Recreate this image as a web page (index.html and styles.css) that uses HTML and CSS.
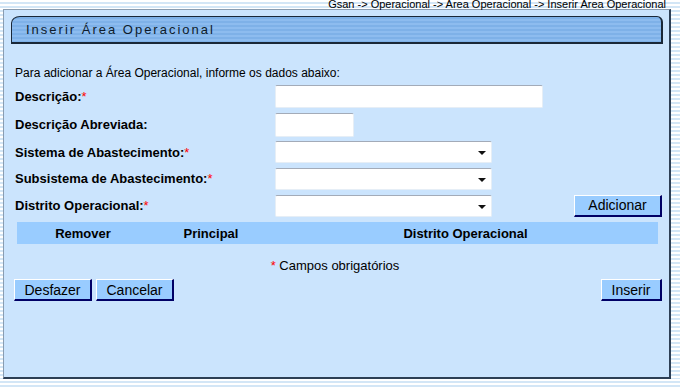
FILE: index.html
```html
<!DOCTYPE html>
<html lang="pt-BR">
<head>
    <meta charset="UTF-8">
    <title>Inserir Área Operacional</title>
    <link rel="stylesheet" href="styles.css">
</head>
<body>
    <div class="crumbs">Gsan -&gt; Operacional -&gt; Area Operacional -&gt; Inserir Area Operacional</div>
    <div class="panel">
        <div class="title-bar">Inserir Área Operacional</div>
        <p class="intro">Para adicionar a Área Operacional, informe os dados abaixo:</p>
        <form class="form">
            <div class="row row-1">
                <label for="descricao">Descrição:<span class="req">*</span></label>
                <input type="text" id="descricao" class="field field-long">
            </div>
            <div class="row row-2">
                <label for="abreviada">Descrição Abreviada:</label>
                <input type="text" id="abreviada" class="field field-short">
            </div>
            <div class="row row-3">
                <label for="sistema">Sistema de Abastecimento:<span class="req">*</span></label>
                <div class="select-wrap"><select id="sistema" class="field"><option></option></select></div>
            </div>
            <div class="row row-4">
                <label for="subsistema">Subsistema de Abastecimento:<span class="req">*</span></label>
                <div class="select-wrap"><select id="subsistema" class="field"><option></option></select></div>
            </div>
            <div class="row row-5">
                <label for="distrito">Distrito Operacional:<span class="req">*</span></label>
                <div class="select-wrap"><select id="distrito" class="field"><option></option></select></div>
                <button type="button" class="btn btn-add">Adicionar</button>
            </div>
        </form>
        <table class="grid">
            <thead>
                <tr>
                    <th class="col-remover">Remover</th>
                    <th class="col-principal">Principal</th>
                    <th>Distrito Operacional</th>
                </tr>
            </thead>
        </table>
        <p class="note"><span class="req">*</span> Campos obrigatórios</p>
        <div class="actions">
            <button type="button" class="btn btn-desfazer">Desfazer</button>
            <button type="button" class="btn btn-cancelar">Cancelar</button>
            <button type="button" class="btn btn-inserir">Inserir</button>
        </div>
    </div>
</body>
</html>
```
FILE: styles.css
```css
body {
    margin: 0;
    font-family: "Liberation Sans", Arial, sans-serif;
    background: repeating-linear-gradient(to bottom, #ffffff 0, #ffffff 2px, #d3e6f6 2px, #d3e6f6 4px);
    color: #000;
}

.crumbs {
    width: 666px;
    height: 10px;
    margin-top: -1px;
    font-size: 11px;
    line-height: 11px;
    text-align: right;
    color: #000;
}

.panel {
    box-sizing: border-box;
    width: 668px;
    height: 370px;
    margin-left: 3px;
    margin-top: 0;
    padding: 6px 6px 0 7px;
    background-color: #cbe4fd;
    border-left: 1px solid #8a9cb0;
    border-top: 1px solid #8a9cb0;
    border-right: 2px solid #2d3f55;
    border-bottom: 2px solid #2d3f55;
}

.title-bar {
    box-sizing: border-box;
    height: 28px;
    padding-left: 14px;
    font-size: 13px;
    line-height: 26px;
    letter-spacing: 2px;
    color: #0d1b2b;
    background: repeating-linear-gradient(to bottom, #7eb1e8 0, #7eb1e8 2px, #8dbcef 2px, #8dbcef 4px);
    border: 1px solid #1a2838;
    border-bottom-width: 2px;
    border-right-width: 2px;
    border-top-left-radius: 9px 7px;
    border-top-right-radius: 6px;
}

.intro {
    margin: 22px 0 0 4px;
    font-size: 12px;
    line-height: 14px;
}

.form {
    margin: 2px 0 0 4px;
}

.row {
    display: flex;
    align-items: center;
}

.row-1 { height: 28px; }
.row-2 { height: 29px; }
.row-3 { height: 26px; }
.row-4 { height: 27px; }
.row-5 { height: 27px; }

label {
    width: 260px;
    font-size: 13px;
    font-weight: bold;
    color: #000;
}

.req {
    color: #ff0000;
    font-weight: normal;
}

.field {
    box-sizing: border-box;
    height: 23px;
    margin: 0;
    background: #ffffff;
    border: 1px solid #e6eef6;
    border-top-color: #a3abb8;
    border-radius: 2px;
    font-family: inherit;
    font-size: 12px;
}

.field-long { width: 268px; }
.field-short { width: 79px; height: 24px; }

.select-wrap {
    position: relative;
}

.select-wrap select {
    width: 217px;
    height: 22px;
    -webkit-appearance: none;
    appearance: none;
}

.select-wrap::after {
    content: "";
    position: absolute;
    right: 6px;
    top: 10px;
    border-left: 4px solid transparent;
    border-right: 4px solid transparent;
    border-top: 4px solid #111;
}

.btn {
    box-sizing: border-box;
    height: 22px;
    padding: 0;
    font-family: inherit;
    font-size: 14px;
    color: #000;
    background-color: #99ccff;
    border: 1px solid #ffffff;
    border-right: 2px solid #000066;
    border-bottom: 2px solid #000066;
    cursor: pointer;
}

.btn-add {
    width: 88px;
    margin-left: auto;
    margin-right: 1px;
}

.grid {
    width: 641px;
    margin: 3px 0 0 6px;
    border-collapse: collapse;
}

.grid th {
    height: 22px;
    padding: 0;
    font-size: 13px;
    background-color: #99ccff;
    text-align: center;
}

.col-remover { width: 132px; }
.col-principal { width: 124px; }

.note {
    margin: 14px 0 0 0;
    font-size: 13px;
    line-height: 15px;
    text-align: center;
    padding-right: 4px;
}

.actions {
    display: flex;
    gap: 4px;
    margin: 6px 0 0 3px;
}

.btn-desfazer { width: 78px; }
.btn-cancelar { width: 78px; }

.btn-inserir {
    width: 61px;
    margin-left: auto;
    margin-right: 1px;
}
```
